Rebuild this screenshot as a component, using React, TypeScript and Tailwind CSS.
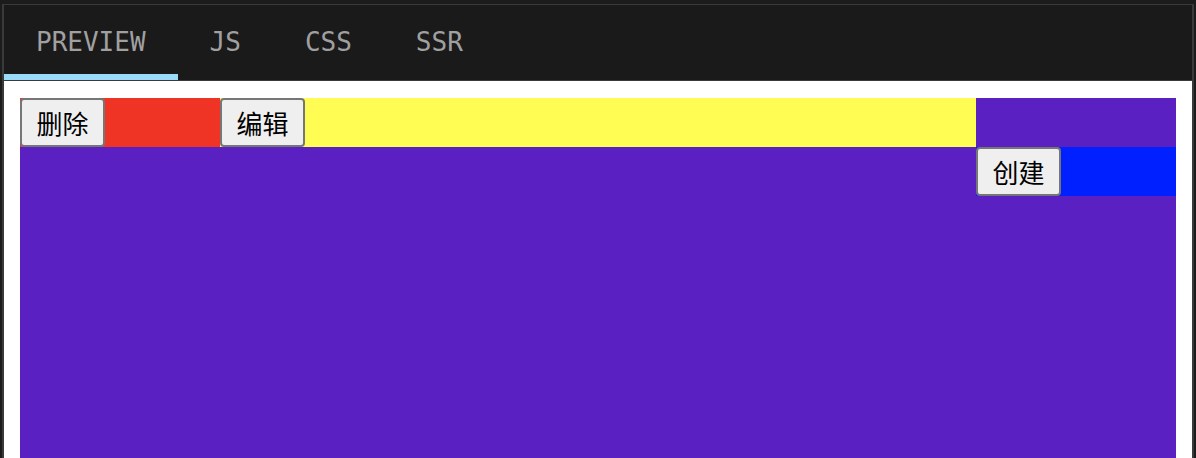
const tabs = ["PREVIEW", "JS", "CSS", "SSR"];

const Btn = ({ text }: { text: string }) => (
  <button className="w-[85px] h-[49px] shrink-0 bg-[#efefef] border-2 border-[#767676] rounded-[4px] text-[26px] leading-none text-black font-['Noto_Sans_CJK_SC',sans-serif]">
    {text}
  </button>
);

export default function App() {
  return (
    <div className="h-[458px] bg-[#1c1c1c] pt-[4px] px-[2px] overflow-hidden">
      <div className="h-full border-t border-x-2 border-[#3a3a3a] flex flex-col">
        <div className="h-[76px] flex bg-[#1a1a1a] border-b border-[#3a3a3a] shrink-0">
          {tabs.map((t, i) => (
            <div
              key={t}
              className={`px-[32px] pt-[5px] flex items-center text-[26px] leading-none text-[#a0a0a0] font-['DejaVu_Sans_Mono',monospace] border-b-[6px] ${
                i == 0 ? "border-[#9bdbfa]" : "border-transparent"
              }`}
            >
              {t}
            </div>
          ))}
        </div>
        <div className="flex-1 bg-white pt-[17px] px-[16px] flex flex-col">
          <div className="flex-1 bg-[#5b20c1]">
            <div className="flex">
              <div className="w-[200px] bg-[#ef3324] flex">
                <Btn text="删除" />
              </div>
              <div className="w-[756px] bg-[#fffc54] flex">
                <Btn text="编辑" />
              </div>
            </div>
            <div className="flex justify-end">
              <div className="w-[200px] bg-[#0120ff] flex">
                <Btn text="创建" />
              </div>
            </div>
          </div>
        </div>
      </div>
    </div>
  );
}
